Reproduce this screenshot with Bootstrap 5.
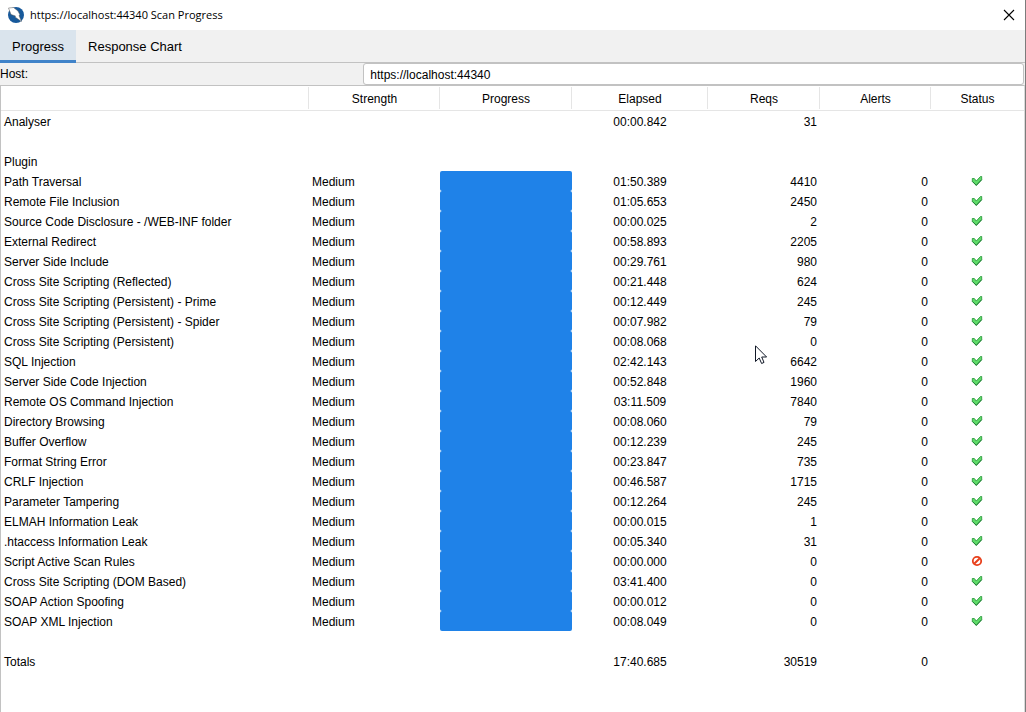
<!DOCTYPE html>
<html lang="en">
<head>
<meta charset="utf-8">
<meta name="viewport" content="width=device-width, initial-scale=1">
<title>https://localhost:44340 Scan Progress</title>
<link href="https://cdn.jsdelivr.net/npm/bootstrap@5.3.0/dist/css/bootstrap.min.css" rel="stylesheet">
<style>
  body { font: 12px/20px "Liberation Sans", Arial, sans-serif; color: #000; background: #fff; }
  .scan-window { border-right: 1px solid #7c7c7c; }
  .desk-edge { width: 1px; background: #c4c4c4; }
  .title-bar { height: 30px; gap: 6px; padding: 0 10px 0 8px; }
  .title-text { font: 11px/20px "Open Sans", "Noto Sans", sans-serif; }
  .close-btn { width: 12px; height: 12px; }
  .scan-tabs { --bs-nav-link-padding-x: 12px; --bs-nav-link-padding-y: 6px; --bs-nav-link-color: #000; --bs-nav-link-hover-color: #000; --bs-nav-link-font-size: 13px; background: #f1f1f1; border-bottom: 1px solid #c2c2c2; }
  .scan-tabs .nav-link { line-height: 21px; height: 33px; border-radius: 0; margin-bottom: -1px; }
  .scan-tabs .nav-link.active { background: #dae4ed; border-bottom: 3px solid #4083c9; }
  .host-row { display: grid; grid-template-columns: 11fr 20fr; align-items: center; padding-right: 1px; background: #f1f1f1; }
  .host-field { height: 22px; padding: 1px 6px 0; font-size: 12px; line-height: 20px; color: #000; border: 1px solid #c2c2c2; border-radius: 3px; }
  .table-frame { border: solid #c2c2c2; border-width: 1px 1px 0 1px; border-right-color: #dadada; }
  .scan-table { --bs-table-bg: transparent; --bs-table-color: #000; table-layout: fixed; color: #000; }
  .scan-table th, .scan-table td { height: 20px; padding: 2px 3px 0; border: 0; white-space: nowrap; line-height: 18px; }
  .scan-table thead th { height: 24px; padding: 3px 3px 0; line-height: 20px; font-weight: 400; text-align: center; vertical-align: middle; border-bottom: 1px solid #e5e5e5; background: linear-gradient(#e5e5e5, #e5e5e5) right 1px / 1px 22px no-repeat; }
  .scan-table thead th:last-child { background: none; }
  .c-strength { width: 131px; } .c-progress { width: 132px; } .c-elapsed { width: 136px; }
  .c-reqs { width: 112px; } .c-alerts { width: 111px; } .c-status { width: 93px; }
  .scan-table td.bar-cell { padding: 0; }
  .scan-table td.status-cell { padding: 0 1px 0 0; }
  .scan-bar { --bs-progress-height: 20px; --bs-progress-border-radius: 2px; --bs-progress-bg: transparent; --bs-progress-bar-bg: #1f82e8; }
  .mark-icon { width: 12px; height: 12px; display: block; margin: 0 auto; }
  .pointer { left: 755px; top: 345px; }
</style>
</head>
<body>
<div class="d-flex min-vh-100">
  <main class="scan-window flex-grow-1 d-flex flex-column">
    <header class="title-bar d-flex align-items-center">
      <svg width="16" height="16" viewBox="0 0 16 16" aria-hidden="true">
        <circle cx="8" cy="8" r="8" fill="#17599b"/>
        <path d="M.5 1 5.500 .5 10 4 12 8 11 8.500 13.500 14.500 7 10 7.500 9 3 7.500Z" fill="#fff" stroke="#555" stroke-width=".5"/>
      </svg>
      <h1 class="title-text mb-0">https://localhost:44340 Scan Progress</h1>
      <button type="button" class="close-btn btn p-0 border-0 d-flex ms-auto" aria-label="Close">
        <svg width="12" height="12" viewBox="0 0 12 12"><path d="M1 1 11 11M11 1 1 11" stroke="#000" stroke-width="1.1"/></svg>
      </button>
    </header>
    <nav class="nav scan-tabs" aria-label="Views">
      <a class="nav-link active" href="#scan" aria-current="page">Progress</a>
      <a class="nav-link" href="#chart">Response Chart</a>
    </nav>
    <div class="host-row">
      <label for="host">Host:</label>
      <input id="host" class="form-control host-field" type="text" value="https://localhost:44340">
    </div>
    <div class="table-frame flex-grow-1" id="scan">
      <table class="table scan-table mb-0">
        <thead>
          <tr>
            <th scope="col"></th>
            <th scope="col" class="c-strength">Strength</th>
            <th scope="col" class="c-progress">Progress</th>
            <th scope="col" class="c-elapsed">Elapsed</th>
            <th scope="col" class="c-reqs">Reqs</th>
            <th scope="col" class="c-alerts">Alerts</th>
            <th scope="col" class="c-status">Status</th>
          </tr>
        </thead>
        <tbody id="rows"></tbody>
      </table>
    </div>
  </main>
  <div class="desk-edge"></div>
</div>
<svg class="pointer position-absolute" width="13" height="20" viewBox="0 0 13 20" aria-hidden="true">
  <path d="M.5.8V16.5L4.2 13 6.6 18.5 9 17.4 6.7 12H11.6Z" fill="#fff" stroke="#111827"/>
</svg>
<svg class="position-absolute" width="0" height="0" aria-hidden="true">
  <symbol id="done" viewBox="0 0 12 12">
    <path d="M1.300 3.500H3.300L5.300 6 9.500 1.500H10.700V4.800L5.300 10.500 1.300 6.500Z" fill="#5fdb68" stroke="#2f9a40" stroke-width=".9"/>
    <path d="M1.500 6.500 5.300 10.300 10.500 4.800" fill="none" stroke="#23803a" stroke-width="1"/>
  </symbol>
  <symbol id="skipped" viewBox="0 0 12 12"><circle cx="6" cy="6" r="4.200" fill="#fff" stroke="#e8401c" stroke-width="1.800"/><path d="M3.200 8.800 8.800 3.200" stroke="#e8401c" stroke-width="2"/></symbol>
</svg>
<script src="https://cdn.jsdelivr.net/npm/bootstrap@5.3.0/dist/js/bootstrap.bundle.min.js"></script>
<script>
  const plugins = [
    ["Path Traversal", "01:50.389", 4410],
    ["Remote File Inclusion", "01:05.653", 2450],
    ["Source Code Disclosure - /WEB-INF folder", "00:00.025", 2],
    ["External Redirect", "00:58.893", 2205],
    ["Server Side Include", "00:29.761", 980],
    ["Cross Site Scripting (Reflected)", "00:21.448", 624],
    ["Cross Site Scripting (Persistent) - Prime", "00:12.449", 245],
    ["Cross Site Scripting (Persistent) - Spider", "00:07.982", 79],
    ["Cross Site Scripting (Persistent)", "00:08.068", 0],
    ["SQL Injection", "02:42.143", 6642],
    ["Server Side Code Injection", "00:52.848", 1960],
    ["Remote OS Command Injection", "03:11.509", 7840],
    ["Directory Browsing", "00:08.060", 79],
    ["Buffer Overflow", "00:12.239", 245],
    ["Format String Error", "00:23.847", 735],
    ["CRLF Injection", "00:46.587", 1715],
    ["Parameter Tampering", "00:12.264", 245],
    ["ELMAH Information Leak", "00:00.015", 1],
    [".htaccess Information Leak", "00:05.340", 31],
    ["Script Active Scan Rules", "00:00.000", 0, "skipped"],
    ["Cross Site Scripting (DOM Based)", "03:41.400", 0],
    ["SOAP Action Spoofing", "00:00.012", 0],
    ["SOAP XML Injection", "00:08.049", 0]
  ];
  const row = (name, elapsed = "", reqs = "", alerts = "", strength = "", bar = "", status = "") =>
    `<tr><td>${name}</td><td>${strength}</td><td class="bar-cell">${bar}</td><td class="text-center">${elapsed}</td>` +
    `<td class="text-end">${reqs}</td><td class="text-end">${alerts}</td><td class="status-cell align-middle">${status}</td></tr>`;
  const bar = '<div class="progress scan-bar" role="progressbar" aria-valuenow="100" aria-valuemin="0" aria-valuemax="100"><div class="progress-bar w-100"></div></div>';
  document.getElementById("rows").innerHTML = [
    row("Analyser", "00:00.842", 31),
    row(""),
    row("Plugin"),
    ...plugins.map(([name, elapsed, reqs, status = "done"]) =>
      row(name, elapsed, reqs, 0, "Medium", bar, `<svg class="mark-icon" role="img" aria-label="${status}"><use href="#${status}"/></svg>`)),
    row(""),
    row("Totals", "17:40.685", 30519, 0)
  ].join("");
</script>
</body>
</html>
